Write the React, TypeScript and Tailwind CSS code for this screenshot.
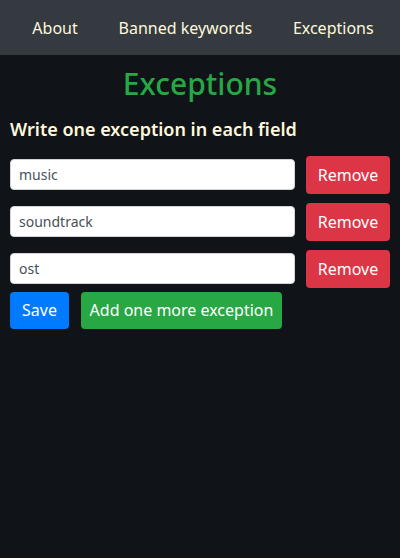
import { useState } from "react";

function App() {
    const [exceptions, setExceptions] = useState(["music", "soundtrack", "ost"]);

    function handleChange(i: number, value: string) {
        const next = [...exceptions];
        next[i] = value;
        setExceptions(next);
    }

    function handleRemove(i: number) {
        setExceptions(exceptions.filter((_, idx) => idx !== i));
    }

    return (
        <div className="min-h-[558px] bg-[#101317] font-['Noto_Sans',sans-serif] text-[#fff8dc]">
            <nav className="flex h-[55px] items-center justify-around bg-[#343a40] pl-[12px] pr-[6px] text-[16px]">
                <a className="cursor-pointer">About</a>
                <a className="cursor-pointer">Banned keywords</a>
                <a className="cursor-pointer">Exceptions</a>
            </nav>

            <div className="px-[10px]">
                <h1 className="mt-[11px] text-center text-[30px] font-medium leading-[1.2] text-[#28a745]">
                    Exceptions
                </h1>
                <h5 className="mt-[17px] text-[18px] font-semibold leading-[1.2]">
                    Write one exception in each field
                </h5>

                <div className="mt-[15px] flex flex-col gap-[9px]">
                    {exceptions.map((ex, i) => (
                        <div key={i} className="flex items-center gap-[11px]">
                            <input
                                value={ex}
                                onChange={(e) => handleChange(i, e.target.value)}
                                className="h-[31px] flex-1 rounded-[4px] border border-[#ced4da] bg-white px-[8px] text-[14px] text-[#495057] outline-none"
                            />
                            <button
                                onClick={() => handleRemove(i)}
                                className="h-[38px] w-[84px] rounded-[4px] bg-[#dc3545] text-[16px] text-white"
                            >
                                Remove
                            </button>
                        </div>
                    ))}
                </div>

                <div className="mt-[4px] flex gap-[12px]">
                    <button className="h-[37px] w-[59px] rounded-[4px] bg-[#007bff] text-[16px] text-white">
                        Save
                    </button>
                    <button
                        onClick={() => setExceptions([...exceptions, ""])}
                        className="h-[37px] w-[201px] rounded-[4px] bg-[#28a745] text-[16px] text-white"
                    >
                        Add one more exception
                    </button>
                </div>
            </div>
        </div>
    );
}

export default App;
